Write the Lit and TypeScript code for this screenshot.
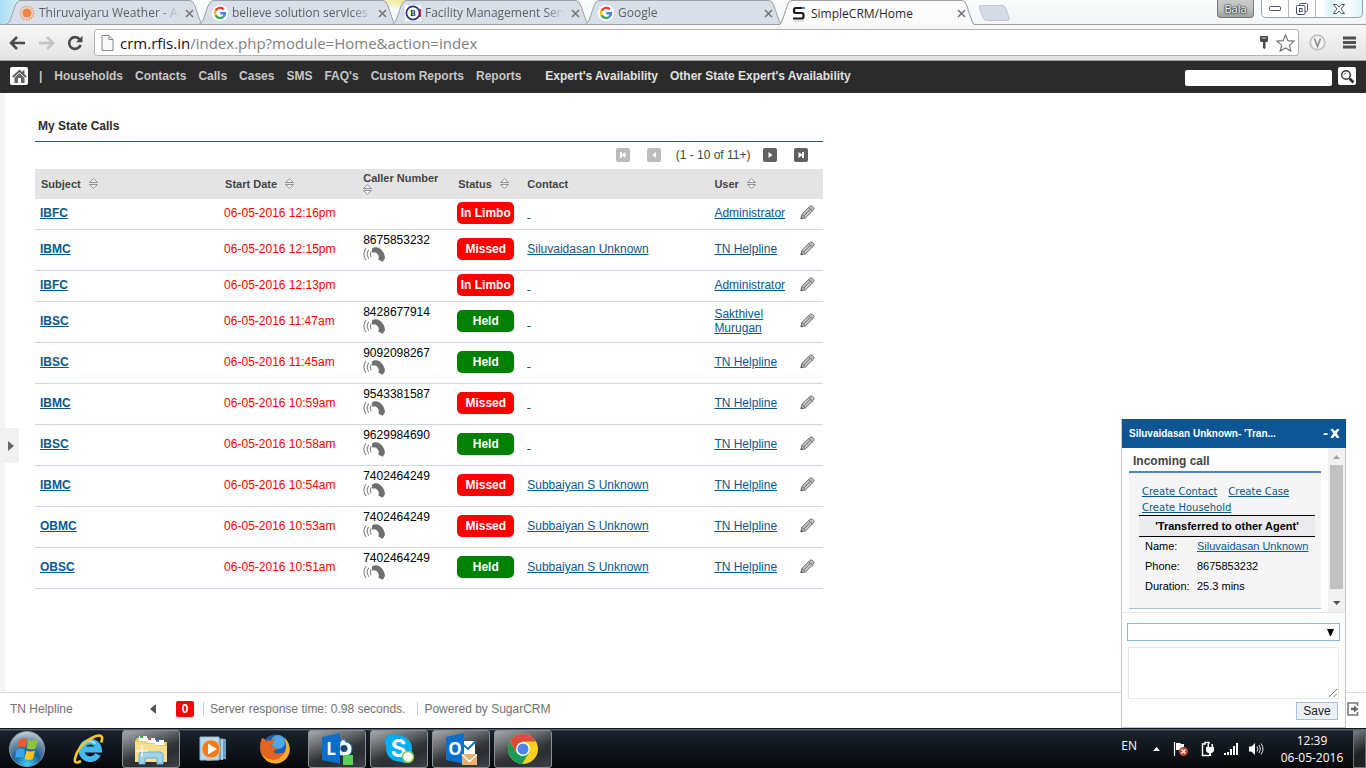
import { LitElement, html, svg, css, nothing } from "lit";
import { customElement } from "lit/decorators.js";
import { classMap } from "lit/directives/class-map.js";

interface Call {
  subject: string;
  start: string;
  phone?: string;
  status: "In Limbo" | "Missed" | "Held";
  contact?: string;
  user: string;
}

const CALLS: Call[] = [
  { subject: "IBFC", start: "06-05-2016 12:16pm", status: "In Limbo", user: "Administrator" },
  { subject: "IBMC", start: "06-05-2016 12:15pm", phone: "8675853232", status: "Missed", contact: "Siluvaidasan Unknown", user: "TN Helpline" },
  { subject: "IBFC", start: "06-05-2016 12:13pm", status: "In Limbo", user: "Administrator" },
  { subject: "IBSC", start: "06-05-2016 11:47am", phone: "8428677914", status: "Held", user: "Sakthivel Murugan" },
  { subject: "IBSC", start: "06-05-2016 11:45am", phone: "9092098267", status: "Held", user: "TN Helpline" },
  { subject: "IBMC", start: "06-05-2016 10:59am", phone: "9543381587", status: "Missed", user: "TN Helpline" },
  { subject: "IBSC", start: "06-05-2016 10:58am", phone: "9629984690", status: "Held", user: "TN Helpline" },
  { subject: "IBMC", start: "06-05-2016 10:54am", phone: "7402464249", status: "Missed", contact: "Subbaiyan S Unknown", user: "TN Helpline" },
  { subject: "OBMC", start: "06-05-2016 10:53am", phone: "7402464249", status: "Missed", contact: "Subbaiyan S Unknown", user: "TN Helpline" },
  { subject: "OBSC", start: "06-05-2016 10:51am", phone: "7402464249", status: "Held", contact: "Subbaiyan S Unknown", user: "TN Helpline" },
];

const googleIcon = html`<svg width="16" height="16" viewBox="0 0 16 16"><circle cx="8" cy="8" r="8" fill="#fff"/><g fill="none" stroke-width="2.4"><path d="M11.8 4.4A5 5 0 0 0 3.6 5.8" stroke="#ea4335"/><path d="M3.6 5.8a5 5 0 0 0 0 4.6" stroke="#fbbc05"/><path d="M3.6 10.3a5 5 0 0 0 7.6 1.6" stroke="#34a853"/><path d="M11 12.1A5 5 0 0 0 13 8.2H8.2" stroke="#4285f4"/></g></svg>`;

const TABS = [
  {
    title: "Thiruvaiyaru Weather - Ac",
    icon: html`<svg width="16" height="16" viewBox="0 0 16 16"><circle cx="8" cy="8" r="4.6" fill="#f5853f"/><circle cx="8" cy="8" r="6.6" fill="none" stroke="#f5853f" stroke-width="1.7" stroke-dasharray="1.1 1.49"/></svg>`,
  },
  { title: "believe solution services -", icon: googleIcon },
  {
    title: "Facility Management Servi",
    icon: html`<svg width="16" height="16" viewBox="0 0 16 16"><path fill="#fff" d="M0 0h16v16H0z"/><path fill="#d33" d="M14 4h2v8h-2z"/><circle cx="8" cy="8" r="6.6" fill="#fff" stroke="#2c2f86" stroke-width="1.7"/><text x="8" y="11" font-family="Liberation Serif, serif" font-weight="bold" font-size="8" text-anchor="middle" fill="#222">B</text></svg>`,
  },
  { title: "Google", icon: googleIcon },
  {
    title: "SimpleCRM/Home",
    active: true,
    icon: html`<svg width="16" height="16" viewBox="0 0 16 16"><path d="M12 2H5Q3 2 3 4v1.5Q3 7 5 7h5.5q2 0 2 2v1.500q0 2-2 2H2" fill="none" stroke="#1b1b1b" stroke-width="2.200"/><path d="M11 .9h3v2.200h-3z" fill="#3f8fe8"/><path d="M3 15h10" stroke="#bcd" stroke-width="1"/></svg>`,
  },
];

@customElement("browser-bar")
class BrowserBar extends LitElement {
  static styles = css`
    :host { display: block; font-family: "Open Sans", "Noto Sans", sans-serif; color: #5c5f63; }
    svg { display: block; }
    .strip {
      display: flex; height: 24px; padding-left: 5px; align-items: flex-start;
      background:
        linear-gradient(90deg, #a9def4 0, #d8eef4 20px, transparent 80px),
        radial-gradient(ellipse 80px 10px at 430px 0, #ece765, transparent),
        linear-gradient(#fbfcfc, #f2f4f6);
    }
    .tab { display: grid; flex: 0 1 200px; min-width: 0; height: 24px; margin-right: -7px; font-size: 12px; }
    .tab.active { color: #2b2b2b; height: 25px; z-index: 1; }
    .shape { grid-area: 1 / 1; width: 100%; height: 100%; fill: #d9dfe8; stroke: #9ba1a8; }
    .active .shape { fill: #fbfbfb; }
    .face { grid-area: 1 / 1; display: flex; align-items: center; min-width: 0; padding: 2px 11px 0 14px; }
    .name { flex: 1; min-width: 0; margin: 0 -8px 0 4px; white-space: nowrap; mask-image: linear-gradient(90deg, #000 82%, transparent 96%); }
    .active .name { mask-image: none; }
    .close { border: 0; padding: 0; background: none; color: #777; margin-left: 8px; }
    .newtab { margin: 5px 0 0 8px; border: 0; padding: 0; background: none; }
    .grow { flex: 1; }
    .user { height: 18px; width: 37px; padding: 0; border: 1px solid #777; border-top: 0; border-radius: 0 0 4px 4px; background: linear-gradient(#c9cbcc, #bfc1c2 50%, #9fa2a3); font: 11px/16px "Open Sans", sans-serif; color: #fff; text-shadow: 0 0 2px #000, 0 0 2px #000; }
    .win { display: flex; height: 18px; margin: 0 3px 0 7px; border: 1px solid #9aa3ab; border-top: 0; border-radius: 0 0 5px 5px; box-sizing: border-box; background: linear-gradient(90deg, #fff 60%, #def5fa 68%, #fff 85%, #def5fa); }
    .win button { width: 27px; border: 0; border-right: 1px solid #b3b9bf; padding: 0; background: none; display: grid; place-items: center; }
    .win button:last-child { width: 46px; border: 0; }
    .bar { display: flex; align-items: center; height: 37px; box-sizing: border-box; border-top: 1px solid #9ba1a8; border-bottom: 1px solid #a0a0a0; padding: 0 10px 0 9px; background: linear-gradient(#f8f8f8, #e3e3e3); }
    .bar button { border: 0; padding: 0; background: none; }
    .nav { margin-right: 12px; }
    .omni { display: flex; align-items: center; flex: 1; height: 27px; box-sizing: border-box; border: 1px solid #b2b2b2; border-radius: 3px; background: #fff; padding: 0 3px 0 6px; margin: 0 10px 0 -1px; gap: 6px; }
    .url { flex: 1; min-width: 0; font-size: 15px; white-space: nowrap; color: #808080; }
    .host { color: #111; }
    .ext { margin-right: 17px; }
  `;

  render() {
    return html`
      <div class="strip">
        ${TABS.map((t) => html`
          <div class=${classMap({ tab: true, active: !!t.active })}>
            <svg class="shape" viewBox="0 0 200 24" preserveAspectRatio="none"><path d="M0 24.500C5 24 5 20 10 6Q12 .5 15 .5H185Q188 .5 190 6C195 20 195 24 200 24.500"/></svg>
            <div class="face">
              ${t.icon}<span class="name">${t.title}</span>
              <button class="close" aria-label="Close tab"><svg width="9" height="9" viewBox="0 0 9 9"><path d="M1 1l7 7M8 1L1 8" stroke="currentColor" stroke-width="1.600"/></svg></button>
            </div>
          </div>`)}
        <button class="newtab" aria-label="New tab"><svg width="32" height="16" viewBox="0 0 32 16"><path d="M3 .5h21q3 0 4 3l3 9q1 3-2 3H9q-3 0-4-3L1.500 3.500Q.5.5 3 .5z" fill="#d5dbe4" stroke="#c0c6cf"/></svg></button>
        <span class="grow"></span>
        <button class="user">Bala</button>
        <div class="win">
          <button aria-label="Minimize"><svg width="12" height="5"><rect x=".5" y=".5" width="11" height="4" rx="1" fill="#fff" stroke="#4b5166"/></svg></button>
          <button aria-label="Restore"><svg width="12" height="12" viewBox="0 0 12 12" fill="#fff" stroke="#4b5166"><rect x="3.500" y=".5" width="8" height="8" rx="1"/><rect x=".5" y="2.500" width="8.500" height="9" rx="1"/><rect x="3.500" y="5.500" width="2.500" height="3"/></svg></button>
          <button aria-label="Close"><svg width="12" height="10" viewBox="0 0 12 10"><path d="M.5.5h3.200L6 3 8.300.5h3.200L8 5l3.500 4.500H8.300L6 7 3.700 9.500H.5L4 5z" fill="#fff" stroke="#4b5166"/></svg></button>
        </div>
      </div>
      <div class="bar">
        <button class="nav" aria-label="Back"><svg width="17" height="16" viewBox="0 0 17 16"><path d="M16 8H2.500M8 2L2 8l6 6" fill="none" stroke="#4a4a4a" stroke-width="2.600"/></svg></button>
        <button class="nav" aria-label="Forward"><svg width="17" height="16" viewBox="0 0 17 16"><path d="M1 8h13.500M9 2l6 6-6 6" fill="none" stroke="#c4c4c4" stroke-width="2.600"/></svg></button>
        <button class="nav" aria-label="Reload"><svg width="16" height="16" viewBox="0 0 16 16"><path d="M12.800 4.500A5.900 5.900 0 1 0 13.600 10" fill="none" stroke="#4a4a4a" stroke-width="2.600"/><path d="M15.500.800v6.400H9z" fill="#4a4a4a"/></svg></button>
        <div class="omni">
          <svg width="13" height="16" viewBox="0 0 13 16"><path d="M1 .5h7l4 4v11H1z" fill="#fafafa" stroke="#888"/><path d="M8 .5v4h4" fill="none" stroke="#888"/></svg>
          <span class="url"><span class="host">crm.rfis.in</span>/index.php?module=Home&amp;action=index</span>
          <svg width="12" height="15" viewBox="0 0 12 15"><path d="M2 1.500Q2 1 3 1h6q1 0 1 .5V6L9 7H3L2 6z" fill="#4a4a4a"/><path d="M4 3h4" stroke="#ddd"/><path d="M5 7h2.500v6l-1 1-1.500-1z" fill="#4a4a4a"/></svg>
          <button aria-label="Bookmark"><svg width="19" height="18" viewBox="0 0 19 18"><path d="M9.500 1l2.400 5.600 6.100.5-4.600 4 1.400 6-5.300-3.200-5.300 3.200 1.400-6L1 7.100l6.100-.5z" fill="#fff" stroke="#777" stroke-width="1.200"/></svg></button>
        </div>
        <button class="ext" aria-label="Extension"><svg width="17" height="17" viewBox="0 0 17 17"><circle cx="8.500" cy="8.500" r="7.300" fill="#f5f5f5" stroke="#c4c4c4" stroke-width="2"/><path d="M5.500 4.500l3 8 3-8" fill="none" stroke="#8a8a8a" stroke-width="1.600"/></svg></button>
        <button aria-label="Menu"><svg width="13" height="13" viewBox="0 0 13 13"><path d="M0 2h13M0 6.500h13M0 11h13" stroke="#505050" stroke-width="2.800"/></svg></button>
      </div>`;
  }
}

const sortIcon = html`<svg class="sort" width="9" height="11" viewBox="0 0 9 11"><path d="M.5 4.500L4.500.7l4 3.800zM.5 6.500l4 3.800 4-3.800z" fill="#f4f4f4" stroke="#888" stroke-width=".9"/></svg>`;

@customElement("calls-dashlet")
class CallsDashlet extends LitElement {
  static styles = css`
    :host { display: block; font-family: "Liberation Sans", Arial, sans-serif; font-size: 12px; line-height: 14px; color: #000; }
    h2 { margin: 0; padding: 26px 3px 8px; font-size: 12px; line-height: 14px; color: #2b2b2b; border-bottom: 1px solid #1d5c96; }
    .pager { display: flex; justify-content: flex-end; align-items: center; height: 27px; box-sizing: border-box; padding: 0 15px 1px 0; gap: 17px; color: #444; }
    .pager span { margin: 0 -4px 0 -2px; }
    .pager button { border: 0; padding: 0; background: none; }
    .pager svg { display: block; fill: #606060; }
    .pager button:disabled svg { fill: #bcbcbc; }
    table { width: 100%; table-layout: fixed; border-spacing: 0; }
    .c1 { width: 184px; } .c2 { width: 139px; } .c3 { width: 94px; } .c4 { width: 70px; } .c5 { width: 187px; } .c6 { width: 86px; } .c7 { width: 28px; }
    th { height: 30px; box-sizing: border-box; padding: 0 0 0 5px; background: #e4e4e4; color: #444; font-size: 11px; line-height: 11px; text-align: left; }
    .inset { padding-left: 6px; }
    .sort { display: inline-block; margin-left: 5px; vertical-align: -1px; }
    .wide .sort { display: block; margin-left: 0; }
    td { padding: 3px 0 5px 5px; border-bottom: 1px solid #cbd7e3; }
    a { color: #0b578f; }
    .subject { font-weight: bold; }
    .start { color: #f00; }
    .phone svg { display: block; margin-bottom: 3px; }
    .badge { display: block; width: 57px; border-radius: 5px; font-weight: bold; line-height: 22px; text-align: center; color: #fff; background: #f00; }
    .held { background: #008000; }
    .edit { border: 0; padding: 0; background: none; display: block; }
    .edit svg { display: block; }
  `;

  private pageButton(label: string, disabled: boolean, glyph: unknown) {
    return html`<button aria-label=${label} ?disabled=${disabled}><svg width="14" height="14" viewBox="0 0 14 14"><rect width="14" height="14" rx="2"/>${glyph}</svg></button>`;
  }

  render() {
    return html`
      <h2>My State Calls</h2>
      <div class="pager">
        ${this.pageButton("First", true, svg`<path d="M4 4h2v2.500L9.500 4v6L6 7.500V10H4z" fill="#fff"/>`)}
        ${this.pageButton("Previous", true, svg`<path d="M9 4v6L5 7z" fill="#fff"/>`)}
        <span>(1 - 10 of 11+)</span>
        ${this.pageButton("Next", false, svg`<path d="M5.500 4v6l4-3z" fill="#fff"/>`)}
        ${this.pageButton("Last", false, svg`<path d="M10 4H8v2.500L4.500 4v6L8 7.500V10h2z" fill="#fff"/>`)}
      </div>
      <table>
        <colgroup><col class="c1"><col class="c2"><col class="c3"><col class="c4"><col class="c5"><col class="c6"><col class="c7"></colgroup>
        <thead>
          <tr>
            <th class="inset">Subject ${sortIcon}</th>
            <th class="inset">Start Date ${sortIcon}</th>
            <th class="wide">Caller Number ${sortIcon}</th>
            <th class="inset">Status ${sortIcon}</th>
            <th>Contact</th>
            <th>User ${sortIcon}</th>
            <th></th>
          </tr>
        </thead>
        <tbody>
          ${CALLS.map((c) => html`
            <tr>
              <td><a class="subject" href="#">${c.subject}</a></td>
              <td class="start">${c.start}</td>
              <td class="phone">${c.phone ? html`${c.phone}<svg width="23" height="15" viewBox="0 0 23 15"><path d="M8.800 1.800Q12-.6 16 1q5.500 3.500 6 10l-2.200 3.800-4.300-2 .3-3.600q-1-2.600-3-3.800l-3.600.2z" fill="#6e6e6e"/><path d="M3 1.200Q-1.200 7 3 13M5.800 2.800Q2.500 7 5.800 11.700M8.300 4.200Q6.300 7 8.300 10.500" fill="none" stroke="#858585" stroke-width="1.100"/></svg>` : nothing}</td>
              <td><span class=${classMap({ badge: true, held: c.status === "Held" })}>${c.status}</span></td>
              <td><a href="#">${c.contact ?? html`&nbsp;`}</a></td>
              <td><a href="#">${c.user}</a></td>
              <td><button class="edit" aria-label="Edit"><svg width="15" height="16" viewBox="0 0 15 16"><path d="M.8 13.800L2 9.300l7.500-7.500q1.300-1.300 2.800-.6l1.300 1.300q1 1.300-.3 2.700l-7.800 7.600z" fill="#c9c9c9" stroke="#666"/><path d="M2 9.500l3.300 3.200M3.500 11.200l7.500-7.500M8.800 2.600L12.300 6" fill="none" stroke="#666"/><path d="M.8 13.800l.6-2.100 1.500 1.500z" fill="#444"/></svg></button></td>
            </tr>`)}
        </tbody>
      </table>`;
  }
}

@customElement("call-popup")
class CallPopup extends LitElement {
  static styles = css`
    :host { display: block; width: 225px; box-sizing: border-box; border: 1px solid #c6c6c6; border-top: 0; background: #fff; font-family: "Liberation Sans", Arial, sans-serif; font-size: 11px; line-height: 14px; color: #000; }
    a { color: #0b578f; }
    header { display: flex; align-items: center; gap: 2px; height: 29px; padding: 0 6px 0 7px; margin: 0 -1px 0 0; background: #0d5693; color: #fff; font-weight: bold; }
    header span { flex: 1; font-size: 10px; }
    header button { border: 0; padding: 0; background: none; color: #fff; font: bold 12px "DejaVu Sans", sans-serif; }
    header svg { display: block; }
    .scroller { display: flex; height: 164px; border-bottom: 1px solid #e6e6e6; }
    .pane { flex: 1; padding: 0 7px; }
    h3 { margin: 0; padding: 6px 4px 3px; font-size: 12px; line-height: 14px; color: #444; border-bottom: 2px solid #4a86cf; }
    .card { background: #f5f5f5; border-bottom: 1px solid #a9c4de; height: 136px; padding: 11px 6px 0 10px; box-sizing: border-box; }
    .links { display: flex; flex-wrap: wrap; column-gap: 11px; height: 31px; padding-left: 3px; font: 10px/16px "DejaVu Sans", Verdana, sans-serif; }
    h4 { margin: 0; border: 1px solid #000; border-width: 1px 0; background: #ebebed; font-size: 11px; line-height: 20px; text-align: center; }
    dl { margin: -1px 0 0; display: grid; grid-template-columns: 52px 1fr; padding-left: 6px; line-height: 20px; white-space: nowrap; }
    dd { margin: 0; }
    .track { display: flex; flex-direction: column; justify-content: space-between; align-items: center; width: 17px; background: #f1f1f1; }
    .thumb { flex: 1; width: 13px; background: #c1c1c1; margin-bottom: 6px; }
    .track svg { display: block; }
    form { display: grid; padding: 10px 5px 7px 5px; gap: 6px; }
    select { appearance: none; height: 18px; border: 1px solid #8db6dd; border-radius: 0; background: #fff; grid-area: 1 / 1; }
    .drop { grid-area: 1 / 1; justify-self: end; align-self: center; margin-right: 6px; pointer-events: none; }
    textarea { height: 52px; margin: 0 1px; box-sizing: border-box; border: 1px solid #e6e6e6; padding: 2px; resize: none; grid-area: 2 / 1; }
    .grip { grid-area: 2 / 1; justify-self: end; align-self: end; margin: 0 3px 2px 0; pointer-events: none; }
    .save { justify-self: end; margin: -3px 2px 0 0; height: 18px; width: 42px; padding: 0; border: 1px solid #a6c3dd; background: #edf1f3; color: #222; font: 12px/16px "Liberation Sans", Arial, sans-serif; }
  `;

  render() {
    return html`
      <header><span>Siluvaidasan Unknown- 'Tran...</span><button aria-label="Minimize">-</button><button aria-label="Close"><svg width="10" height="9" viewBox="0 0 10 9"><path d="M1.500 0L8.500 9M8.500 0L1.500 9" stroke="#fff" stroke-width="2.600"/></svg></button></header>
      <div class="scroller">
        <div class="pane">
          <h3>Incoming call</h3>
          <div class="card">
            <div class="links"><a href="#">Create Contact</a><a href="#">Create Case</a><a href="#">Create Household</a></div>
            <h4>'Transferred to other Agent'</h4>
            <dl>
              <dt>Name:</dt><dd><a href="#">Siluvaidasan Unknown</a></dd>
              <dt>Phone:</dt><dd>8675853232</dd>
              <dt>Duration:</dt><dd>25.3 mins</dd>
            </dl>
          </div>
        </div>
        <div class="track">
          <svg width="17" height="17" viewBox="0 0 17 17"><path d="M5 11l3.500-4 3.500 4z" fill="#a3a3a3"/></svg>
          <div class="thumb"></div>
          <svg width="17" height="17" viewBox="0 0 17 17"><path d="M5 6h7.500L8.700 10z" fill="#505050"/></svg>
        </div>
      </div>
      <form>
        <select aria-label="Outcome"><option></option></select>
        <svg class="drop" width="7" height="7" viewBox="0 0 7 7"><path d="M0 0h7L4 7H3z" fill="#000"/></svg>
        <textarea aria-label="Notes"></textarea>
        <svg class="grip" width="8" height="8" viewBox="0 0 8 8"><path d="M0 8l8-8M4.500 8L8 4.500" stroke="#777"/></svg>
        <button class="save" type="button">Save</button>
      </form>`;
  }
}

const APPS = [
  {
    name: "Internet Explorer",
    icon: html`<svg width="32" height="32" viewBox="0 0 32 32"><path d="M25 21.500a8.800 8.800 0 1 1 1-5H10" fill="none" stroke="#45b8f0" stroke-width="5.800"/><path d="M9.500 13a8 8 0 0 1 13-2.500" fill="none" stroke="#a5e2fb" stroke-width="2"/><path d="M8 28Q.8 32 2 25.500 4.500 14 16 6.500 26 .5 28.500 3.500q1.500 2-.5 6" fill="none" stroke="#fbc61e" stroke-width="2.600"/></svg>`,
  },
  {
    name: "Windows Explorer", open: true,
    icon: html`<svg width="34" height="32" viewBox="0 0 34 32"><path d="M3 5h9l2 2h9l2 2h8v20H1V8z" fill="#e8c967"/><path d="M5 3h8v5H5zM13 5h8v5h-8zM21 7h9v5h-9z" fill="#fff"/><path d="M6 3h3v2H6z" fill="#2fae43"/><path d="M14 5h3v2h-3z" fill="#d94c34"/><path d="M22 7h3v2h-3z" fill="#318ad8"/><path d="M1 9h9l2 2h9l2 2h10v16H1z" fill="#f6df93"/><path d="M5 31V22q0-3 3-3h18q3 0 3 3v9h-6v-6H11v6z" fill="#9fd3ec" stroke="#69acd0"/><path d="M8 12v12M2 18h12" stroke="#fff" stroke-width="1.200"/></svg>`,
  },
  {
    name: "Media Player",
    icon: html`<svg width="28" height="28" viewBox="0 0 28 28"><path d="M8 2l19 2v20L8 26z" fill="#6b9fc2"/><path d="M23 4v21" stroke="#c4e1f2" stroke-width="1.500"/><path d="M1 2h19v23H1z" fill="#b9d9ed" stroke="#8fb9d2"/><circle cx="12" cy="14" r="9" fill="#f07b1c" stroke="#f9b36d"/><path d="M9 8.500v11l9-5.500z" fill="#fff"/></svg>`,
  },
  {
    name: "Firefox",
    icon: html`<svg width="32" height="32" viewBox="0 0 32 32"><circle cx="16.500" cy="15" r="13.500" fill="#1f5fae"/><circle cx="19" cy="9" r="7" fill="#4fa6e4"/><path d="M3 5q2.500 0 4 3 2.500-1 5-.5 2-2 4-2-2 3-2 5l-2 3q3 1 6 1-1 3-4 4 4 3.500 8 1.500 6 0 8-6 1.500 9-5 13.500-8 5-16 .5Q1 23 1 15 1 9 3 5z" fill="#e3631f"/><path d="M25 4q8 8 5 17-4 9.500-14 9.500Q6 30 2 20q6 8 14 6.500Q26 24 27 15q.5-6-2-11z" fill="#f7a82d"/></svg>`,
  },
  {
    name: "Lync", open: true,
    icon: html`<svg width="34" height="32" viewBox="0 0 34 32"><path d="M20 9q3-4 5-2l1 2q6 1 6 7 0 7-8 7l-5-1z" fill="#fff" stroke="#0a70cb"/><circle cx="24" cy="15.500" r="3.300" fill="#2b3d4e" stroke="#0a70cb"/><path d="M2 4L20 0v31L2 27z" fill="#0a70cb"/><text x="11" y="22" text-anchor="middle" font-family="Open Sans, sans-serif" font-weight="bold" font-size="17" fill="#fff">L</text><path d="M23 22h10v10H23z" fill="#59d354"/></svg>`,
  },
  {
    name: "Skype", open: true,
    icon: html`<svg width="32" height="32" viewBox="0 0 32 32"><circle cx="10" cy="9" r="8" fill="#00aff0"/><circle cx="22" cy="22" r="8" fill="#00aff0"/><circle cx="16" cy="15.500" r="13" fill="#00aff0"/><text x="15.500" y="24" text-anchor="middle" font-family="Inter, sans-serif" font-weight="bold" font-size="24" fill="#fff">S</text><circle cx="25" cy="24" r="5.500" fill="#fff" stroke="#8cc63f" stroke-width="1.500"/></svg>`,
  },
  {
    name: "Outlook", open: true,
    icon: html`<svg width="34" height="32" viewBox="0 0 34 32"><path d="M17 8h14v16H17z" fill="#fff"/><path d="M17 10l7 6 8-8" fill="none" stroke="#0a70cb" stroke-width="2"/><path d="M2 4L20 0v31L2 27z" fill="#0a70cb"/><text x="11" y="22" text-anchor="middle" font-family="Open Sans, sans-serif" font-weight="bold" font-size="17" fill="#fff">O</text><path d="M18 21h15v11H18z" fill="#e9b16c"/><path d="M18 21.500l7.500 7 7.500-7" fill="none" stroke="#fff" stroke-width="1.500"/></svg>`,
  },
  {
    name: "Chrome", open: true,
    icon: html`<svg width="32" height="32" viewBox="0 0 32 32"><circle cx="16" cy="16" r="15" fill="#fcd21c"/><path d="M3 8.500A15 15 0 0 0 15 31l7.500-12L9.500 19.700z" fill="#1a9c55"/><path d="M3 8.500A15 15 0 0 1 29 8.500H16L9.500 19.800z" fill="#de4a3c"/><circle cx="16" cy="16" r="7" fill="#fff"/><circle cx="16" cy="16" r="5.500" fill="#4a86e8"/></svg>`,
  },
];

@customElement("task-bar")
class TaskBar extends LitElement {
  static styles = css`
    :host { display: flex; align-items: center; height: 40px; box-sizing: border-box; border-top: 1px solid #10161b; background: linear-gradient(#6b7a86 0, #1a222b 2px, #0c1116 70%, #05070a); color: #fff; font: 12px/17px "Open Sans", "Noto Sans", sans-serif; }
    svg { display: block; }
    button { border: 0; padding: 0; background: none; display: grid; place-items: center; }
    .start { width: 52px; margin-left: 1px; }
    .apps { display: flex; gap: 4px; margin-left: 7px; }
    .app { width: 58px; height: 38px; box-sizing: border-box; border: 1px solid transparent; border-radius: 3px; }
    .open { border-color: #8a9096; background: linear-gradient(160deg, #a8abad 0, #6a6e71 30%, #33373a 55%, #2a2e32 70%, #3d4246); }
    .tray { display: flex; align-items: center; margin-left: auto; gap: 9px; }
    .lang { margin: 0 6px 6px 0; }
    .clock { width: 72px; margin: 0 5px 0 3px; text-align: center; }
    .desk { width: 13px; height: 38px; margin-left: -9px; border: 1px solid #6a7076; background: linear-gradient(150deg, #777c80, #1d2124 60%); }
  `;

  render() {
    return html`
      <button class="start" aria-label="Start"><svg width="38" height="38" viewBox="0 0 38 38">
        <defs><radialGradient id="orb" cx=".5" cy=".95" r=".9"><stop offset="0" stop-color="#3fd0ff"/><stop offset=".45" stop-color="#176096"/><stop offset=".8" stop-color="#7a94ab"/><stop offset="1" stop-color="#b6c6d2"/></radialGradient></defs>
        <circle cx="19" cy="19" r="17.500" fill="url(#orb)" stroke="#8397a6"/>
        <path d="M11 10q4-3 8-1l-1.800 8.500q-4-2-8 0z" fill="#ee5a28"/><path d="M20.500 9.500q4 2 9.500 0l-2.500 9q-4 2-8.800 0z" fill="#8cc63f"/><path d="M8.500 19.500q4-2 8.500 0L15.500 28q-4-2-8.500.5z" fill="#3aa5e8"/><path d="M18.500 20.500q4 2 8.500 0L25 29q-4 2-8.500 0z" fill="#fcc419"/></svg></button>
      <div class="apps">
        ${APPS.map((a) => html`<button class=${classMap({ app: true, open: !!a.open })} aria-label=${a.name}>${a.icon}</button>`)}
      </div>
      <div class="tray">
        <span class="lang">EN</span>
        <svg width="9" height="6" viewBox="0 0 9 6"><path d="M1 5l3.500-4L8 5z" fill="#fff"/></svg>
        <svg width="22" height="16" viewBox="2 0 22 16"><path d="M6.500 1v14" stroke="#fff" stroke-width="1.200"/><path d="M8 2h4l1 1h3v7h-4l-1-1H8z" fill="#fff"/><circle cx="15.500" cy="10.500" r="4.500" fill="#dc3a2c"/><path d="M13.500 8.500l4 4M17.500 8.500l-4 4" stroke="#fff" stroke-width="1.400"/></svg>
        <svg width="14" height="16" viewBox="0 0 14 16"><path d="M8 3V1.500H4V3H1.500v11.500H8" fill="none" stroke="#fff" stroke-width="1.400"/><path d="M5 6h8v3q0 2.500-3 3v3H8v-3q-3-.5-3-3zM6.500 3H8v3H6.500zM10.500 3H12v3h-1.500z" fill="#fff"/></svg>
        <svg width="15" height="12" viewBox="0 0 15 12"><path d="M0 10h2v2H0zM3 9h2v3H3zM6 6h2v6H6zM9 3h2v9H9zM12 0h2v12h-2z" fill="#fff"/></svg>
        <svg width="16" height="14" viewBox="0 0 16 14"><path d="M1 4.500h2.500L7 1v12L3.500 9.500H1z" fill="#fff"/><path d="M9 4.500q2 2.500 0 5M11 3q3 4 0 8M13 1.500q4 5.500 0 11" fill="none" stroke="#ddd"/></svg>
        <div class="clock">12:39<br>06-05-2016</div>
        <button class="desk" aria-label="Show desktop"></button>
      </div>`;
  }
}

@customElement("app-root")
class AppRoot extends LitElement {
  static styles = css`
    :host { display: flex; flex-direction: column; min-height: 100vh; position: relative; background: #fff; font-family: "Liberation Sans", Arial, sans-serif; font-size: 12px; line-height: 14px; }
    svg { display: block; }
    .menu { display: flex; align-items: center; height: 32px; box-sizing: border-box; padding: 0 10px 2px; background: #2b2b2b; color: #c6c6c6; font-weight: bold; white-space: nowrap; }
    .menu a { color: inherit; text-decoration: none; margin-right: 12px; }
    .menu .home, .find { width: 18px; height: 18px; padding: 0; border: 0; border-radius: 2px; background: #fff; display: grid; place-items: center; }
    .menu .home { margin: 0 11px 0 0; }
    .bar { margin-right: 12px; }
    .menu .first { margin-left: 12px; }
    .menu .extra { color: #e0e0e0; }
    .query { width: 147px; height: 16px; box-sizing: border-box; margin: 4px 6px 0 auto; border: 0; border-radius: 2px; background: #fff; }
    .page { flex: 1; display: grid; grid-template-columns: minmax(0, 20fr) minmax(0, 13fr); align-items: start; padding: 0 30px; border-left: 5px solid #f4f4f4; position: relative; }
    .handle { position: absolute; left: -5px; top: 56%; width: 19px; height: 35px; padding: 0 0 0 3px; border: 0; background: #f1f1f1; display: grid; place-items: center; }
    .status { display: flex; align-items: center; height: 36px; box-sizing: border-box; border-top: 1px solid #dcdcdc; padding: 0 7px 3px 10px; color: #717171; }
    .who { width: 140px; }
    .count { width: 18px; margin: 0 9px 0 20px; border-radius: 2px; background: #f00; color: #fff; font-weight: bold; line-height: 16px; text-align: center; }
    .part { border-left: 1px solid #ccc; padding: 0 12px 0 6px; }
    .exit { margin-left: auto; border: 0; padding: 0; background: none; }
    .popup { position: absolute; right: 20px; bottom: 40px; }
  `;

  render() {
    const links = ["Contacts", "Calls", "Cases", "SMS", "FAQ's", "Custom Reports", "Reports"];
    return html`
      <browser-bar></browser-bar>
      <nav class="menu">
        <a class="home" href="#" aria-label="Home"><svg width="15" height="15" viewBox="0 0 15 15"><path d="M.8 8.200L7.500 1.800l6.700 6.400M11.500 1.500v4" fill="none" stroke="#555" stroke-width="1.800"/><path d="M2.500 8.800l5-4.800 5 4.800V14h-10z" fill="#666"/><path d="M6 9h3v5H6z" fill="#fff"/></svg></a>
        <span class="bar">|</span>
        <a href="#">Households</a>
        ${links.map((l) => html`<a href="#">${l}</a>`)}
        <a class="extra first" href="#">Expert's Availability</a>
        <a class="extra" href="#">Other State Expert's Availability</a>
        <input class="query" type="search" aria-label="Search">
        <button class="find" aria-label="Search"><svg width="15" height="15" viewBox="0 0 15 15"><circle cx="6" cy="6" r="4.300" fill="none" stroke="#333" stroke-width="1.400"/><path d="M9.500 9.500l4 4" stroke="#333" stroke-width="2.600"/><path d="M4 6q0-2 2-2" fill="none" stroke="#888"/></svg></button>
      </nav>
      <main class="page">
        <button class="handle" aria-label="Expand sidebar"><svg width="6" height="10" viewBox="0 0 6 10"><path d="M0 0l6 5-6 5z" fill="#666"/></svg></button>
        <calls-dashlet></calls-dashlet>
      </main>
      <footer class="status">
        <span class="who">TN Helpline</span>
        <svg width="6" height="10" viewBox="0 0 6 10"><path d="M6 0L0 5l6 5z" fill="#555"/></svg>
        <span class="count">0</span>
        <span class="part">Server response time: 0.98 seconds.</span>
        <span class="part">Powered by SugarCRM</span>
        <button class="exit" aria-label="Log out"><svg width="12" height="14" viewBox="0 0 12 14"><path d="M10.500 4V1H1v12h9.500v-3" fill="none" stroke="#777" stroke-width="1.600"/><path d="M4 5.800h3V3.500L11.500 7 7 10.500V8.200H4z" fill="#666"/></svg></button>
      </footer>
      <task-bar></task-bar>
      <call-popup class="popup"></call-popup>`;
  }
}
